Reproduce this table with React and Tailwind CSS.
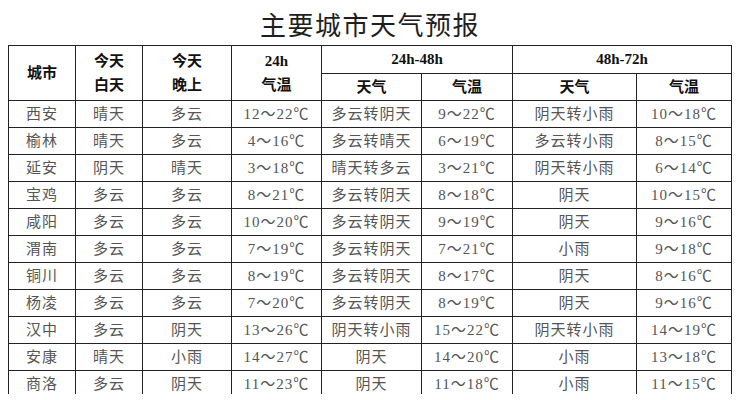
import React from 'react';

const rows = [
  ['西安', '晴天', '多云', '12～22℃', '多云转阴天', '9～22℃', '阴天转小雨', '10～18℃'],
  ['榆林', '晴天', '多云', '4～16℃', '多云转晴天', '6～19℃', '多云转小雨', '8～15℃'],
  ['延安', '阴天', '晴天', '3～18℃', '晴天转多云', '3～21℃', '阴天转小雨', '6～14℃'],
  ['宝鸡', '多云', '多云', '8～21℃', '多云转阴天', '8～18℃', '阴天', '10～15℃'],
  ['咸阳', '多云', '多云', '10～20℃', '多云转阴天', '9～19℃', '阴天', '9～16℃'],
  ['渭南', '多云', '多云', '7～19℃', '多云转阴天', '7～21℃', '小雨', '9～18℃'],
  ['铜川', '多云', '多云', '8～19℃', '多云转阴天', '8～17℃', '阴天', '8～16℃'],
  ['杨凌', '多云', '多云', '7～20℃', '多云转阴天', '8～19℃', '阴天', '9～16℃'],
  ['汉中', '多云', '阴天', '13～26℃', '阴天转小雨', '15～22℃', '阴天转小雨', '14～19℃'],
  ['安康', '晴天', '小雨', '14～27℃', '阴天', '14～20℃', '小雨', '13～18℃'],
  ['商洛', '多云', '阴天', '11～23℃', '阴天', '11～18℃', '小雨', '11～15℃'],
];

const widths = ['w-[67px]', 'w-[67px]', 'w-[89px]', 'w-[90px]', 'w-[100px]', 'w-[91px]', 'w-[124px]', 'w-[95px]'];

const cell = 'border border-[#222] p-0 text-center align-middle';

export default function App() {
  return (
    <div
      className="w-[740px] h-[400px] bg-white overflow-hidden"
      style={{ fontFamily: '"Liberation Serif", "Noto Sans CJK SC", serif' }}
    >
      {/* title */}
      <div className="h-[45px] flex items-start justify-center pt-[9px]">
        <h1
          className="text-[26px] leading-[30px] tracking-[1.5px] font-normal text-[#1e1e1e]"
          style={{ fontFamily: '"Noto Sans CJK SC", sans-serif' }}
        >
          主要城市天气预报
        </h1>
      </div>

      <div className="ml-[8px] h-[349px] overflow-hidden">
        <table className="w-[723px] table-fixed border-collapse">
          <colgroup>
            {widths.map((w, i) => (
              <col key={i} className={w} />
            ))}
          </colgroup>
          <thead className="font-bold text-[15px] text-[#111]">
            <tr className="h-[28px]">
              <th rowSpan={2} className={cell}>城市</th>
              <th rowSpan={2} className={`${cell} leading-[24px]`}>今天<br />白天</th>
              <th rowSpan={2} className={`${cell} leading-[24px]`}>今天<br />晚上</th>
              <th rowSpan={2} className={`${cell} leading-[24px]`}>24h<br />气温</th>
              <th colSpan={2} className={cell}>24h-48h</th>
              <th colSpan={2} className={cell}>48h-72h</th>
            </tr>
            <tr className="h-[27px]">
              <th className={cell}>天气</th>
              <th className={cell}>气温</th>
              <th className={cell}>天气</th>
              <th className={cell}>气温</th>
            </tr>
          </thead>
          <tbody className="text-[15px] text-[#555]">
            {rows.map((r) => (
              <tr key={r[0]} className="h-[27px]">
                {r.map((v, i) => (
                  <td key={i} className={`${cell} tracking-[1px]`}>
                    {v}
                  </td>
                ))}
              </tr>
            ))}
          </tbody>
        </table>
      </div>
    </div>
  );
}
